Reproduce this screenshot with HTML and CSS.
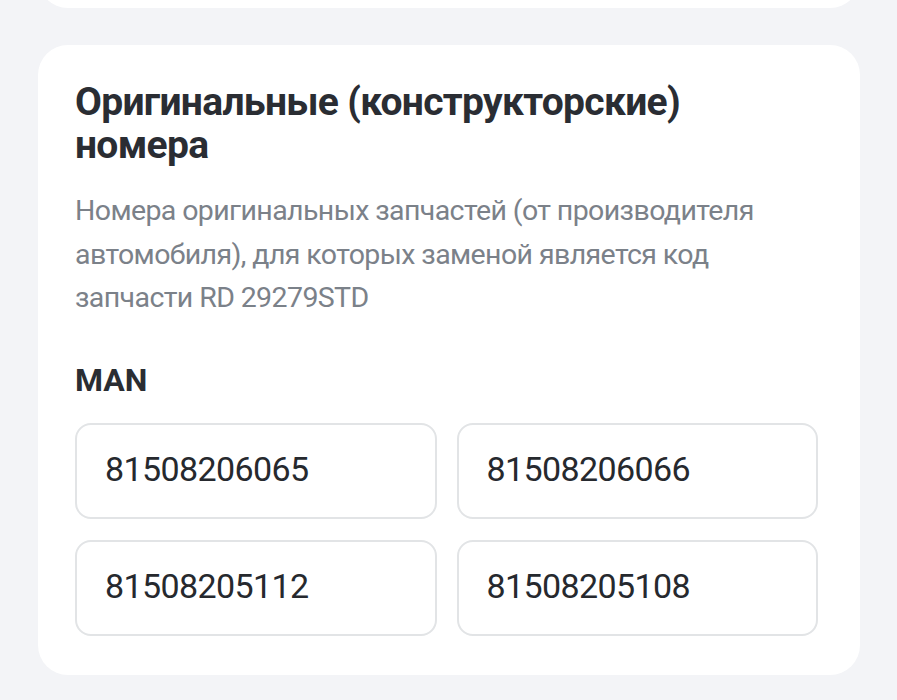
FILE: index.html
```html
<!DOCTYPE html>
<html lang="ru">
<head>
    <meta charset="UTF-8">
    <meta name="viewport" content="width=device-width, initial-scale=1.0">
    <title>Оригинальные номера</title>
    <link rel="stylesheet" href="styles.css">
</head>
<body>
    <div class="page">
        <div class="card card-prev"></div>

        <div class="card">
            <h2 class="card-title">Оригинальные (конструкторские) номера</h2>
            <p class="card-desc">Номера оригинальных запчастей (от производителя автомобиля), для которых заменой является код запчасти RD 29279STD</p>

            <div class="brand">
                <div class="brand-name">MAN</div>
                <div class="oem-grid">
                    <div class="oem-item">81508206065</div>
                    <div class="oem-item">81508206066</div>
                    <div class="oem-item">81508205112</div>
                    <div class="oem-item">81508205108</div>
                </div>
            </div>
        </div>
    </div>
</body>
</html>
```

FILE: styles.css
```css
body {
    margin: 0;
    background-color: #f3f4f7;
    font-family: Roboto, "Noto Sans", sans-serif;
    color: #2a2d33;
}
.page {
    padding: 0 37px 0 38px;
    display: flex;
    flex-direction: column;
    gap: 37px;
}
.card {
    background-color: #fff;
    border-radius: 30px;
    padding: 36px 42px 39px 37px;
}
/* previous block, only its bottom edge shows */
.card-prev {
    height: 100px;
    padding: 0;
    margin-top: -92px;
}
.card-title {
    margin: 0;
    max-width: 640px;
    font-size: 39px;
    line-height: 43px;
    font-weight: 700;
    letter-spacing: -0.7px;
}
.card-desc {
    margin: 22px 0 0;
    font-size: 28.5px;
    line-height: 43.5px;
    color: #7b8189;
    letter-spacing: -0.6px;
}
.brand {
    margin-top: 40px;
}
.brand-name {
    font-size: 32px;
    line-height: 40px;
    font-weight: 700;
}
.oem-grid {
    margin-top: 23px;
    display: grid;
    grid-template-columns: 1fr 1fr;
    gap: 21px 20px;
}
.oem-item {
    height: 89px;
    border: 2px solid #e2e4e6;
    border-radius: 16px;
    padding: 0 0 3px 28px;
    display: flex;
    align-items: center;
    font-size: 34px;
    letter-spacing: -0.6px;
    color: #26292e;
}
```
